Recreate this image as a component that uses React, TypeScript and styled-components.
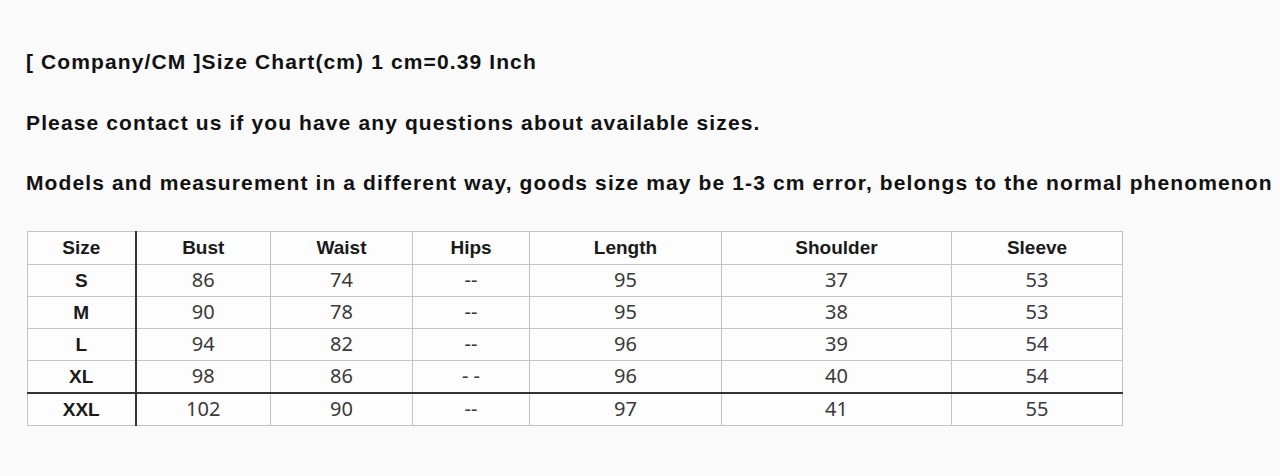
import React from "react";
import styled, { createGlobalStyle } from "styled-components";

const Global = createGlobalStyle`
  html, body { margin: 0; padding: 0; background: #fafafa; }
  body { font-family: "Liberation Sans", Arial, sans-serif; }
`;

const Page = styled.div`
  width: 1280px;
  height: 476px;
  box-sizing: border-box;
  padding: 49px 0 0 26px;
  background: #fafafa;
  overflow: hidden;
`;

const Line = styled.p`
  margin: 0 0 35.5px 0;
  height: 25px;
  line-height: 25px;
  font-family: "Liberation Sans", Arial, sans-serif;
  font-weight: 700;
  font-size: 21px;
  letter-spacing: 1.12px;
  color: #111;
  white-space: nowrap;
`;

const Table = styled.table`
  margin: 14px 0 0 1px;
  border-collapse: collapse;
  table-layout: fixed;
  width: 1095px;
  background: #fdfdfd;
`;

const Th = styled.th<{ $thick?: boolean }>`
  height: 32px;
  padding: 0;
  border: 1px solid #c4c4c4;
  border-right: ${(p) => (p.$thick ? "2px solid #333" : "1px solid #c4c4c4")};
  font-family: "Liberation Sans", Arial, sans-serif;
  font-weight: 700;
  font-size: 19px;
  color: #1a1a1a;
  text-align: center;
  vertical-align: middle;
`;

const Td = styled.td<{ $thick?: boolean; $label?: boolean; $topThick?: boolean }>`
  height: 31px;
  padding: 0;
  border: 1px solid #c4c4c4;
  border-right: ${(p) => (p.$thick ? "2px solid #333" : "1px solid #c4c4c4")};
  border-top: ${(p) => (p.$topThick ? "2px solid #333" : "1px solid #c4c4c4")};
  font-family: ${(p) =>
    p.$label ? `"Liberation Sans", Arial, sans-serif` : `"Noto Sans", sans-serif`};
  font-weight: ${(p) => (p.$label ? 700 : 400)};
  font-size: ${(p) => (p.$label ? "19px" : "20px")};
  color: ${(p) => (p.$label ? "#1a1a1a" : "#3a3a3a")};
  text-align: center;
  vertical-align: middle;
  line-height: 1;
`;

const widths = [108, 135, 142, 117, 192, 230, 171];
const headers = ["Size", "Bust", "Waist", "Hips", "Length", "Shoulder", "Sleeve"];
const rows = [
  ["S", "86", "74", "--", "95", "37", "53"],
  ["M", "90", "78", "--", "95", "38", "53"],
  ["L", "94", "82", "--", "96", "39", "54"],
  ["XL", "98", "86", "- -", "96", "40", "54"],
  ["XXL", "102", "90", "--", "97", "41", "55"],
];

export default function App() {
  return (
    <Page>
      <Global />
      <Line>[ Company/CM ]Size Chart(cm) 1 cm=0.39 Inch</Line>
      <Line>Please contact us if you have any questions about available sizes.</Line>
      <Line>
        Models and measurement in a different way, goods size may be 1-3 cm error, belongs to the normal phenomenon
      </Line>
      <Table>
        <colgroup>
          {widths.map((w, i) => (
            <col key={i} style={{ width: w }} />
          ))}
        </colgroup>
        <thead>
          <tr>
            {headers.map((h, i) => (
              <Th key={h} $thick={i === 0}>
                {h}
              </Th>
            ))}
          </tr>
        </thead>
        <tbody>
          {rows.map((r, ri) => (
            <tr key={r[0]}>
              {r.map((c, ci) => (
                <Td key={ci} $label={ci === 0} $thick={ci === 0} $topThick={ri === 4}>
                  {c}
                </Td>
              ))}
            </tr>
          ))}
        </tbody>
      </Table>
    </Page>
  );
}
